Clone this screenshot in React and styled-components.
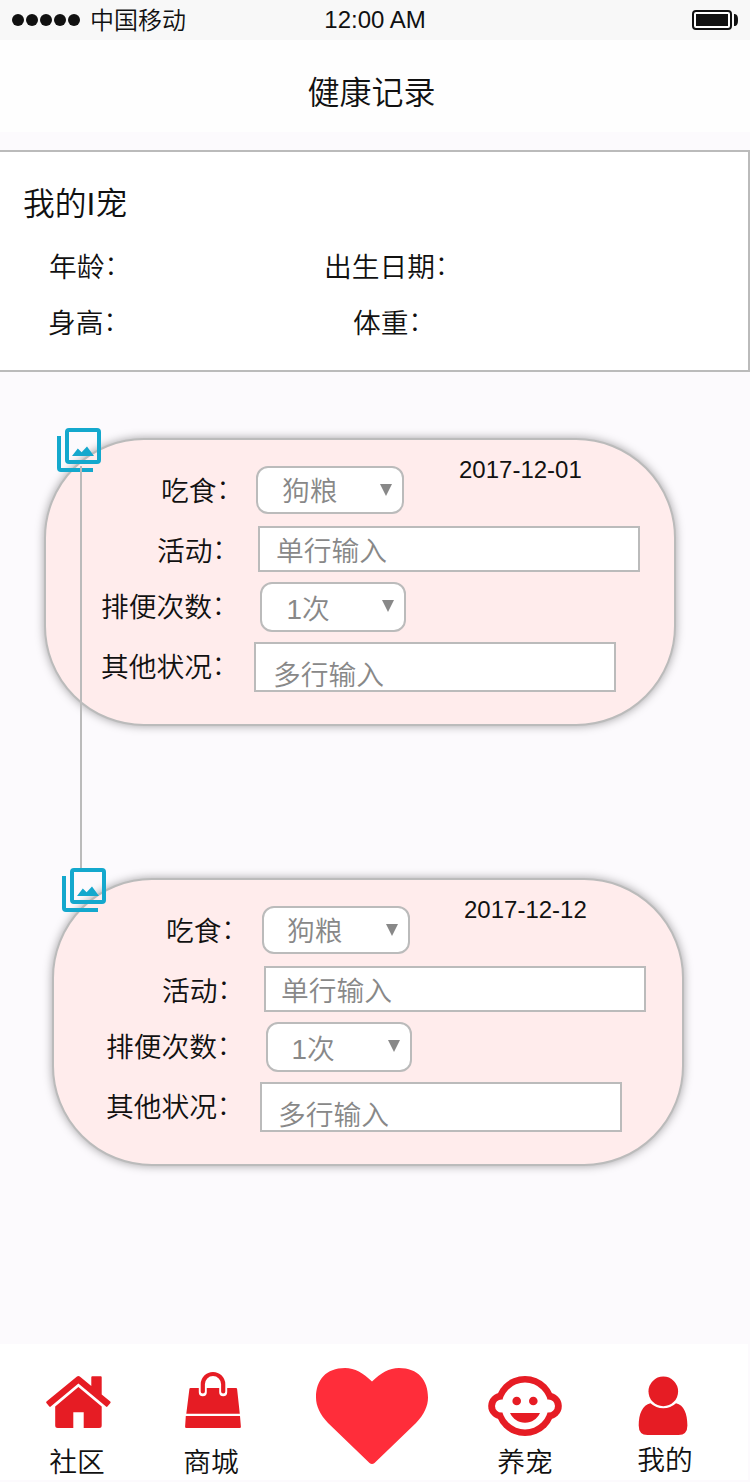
import React from "react";
import styled, { createGlobalStyle } from "styled-components";

const GlobalStyle = createGlobalStyle`
  * { box-sizing: border-box; }
  body {
    margin: 0;
    background: #fcfafd;
    color: #111;
    font-family: "Liberation Sans", "Noto Sans CJK SC", sans-serif;
    font-weight: 350;
  }
`;

const Screen = styled.div`
  width: 750px;
  height: 1482px;
  display: flex;
  flex-direction: column;
  overflow: hidden;
`;

const StatusBar = styled.div`
  height: 40px;
  flex: none;
  display: grid;
  grid-template-columns: 1fr auto 1fr;
  align-items: center;
  padding: 0 12px;
  background: #f8f8f8;
  font-size: 24px;
  line-height: 28px;
`;

const Carrier = styled.div`
  display: flex;
  align-items: center;
  gap: 10px;
`;

const CarrierName = styled.span`
  padding-top: 1px;
`;

const Signal = styled.div`
  display: flex;
  gap: 2px;
`;

const Dot = styled.i`
  width: 12px;
  height: 12px;
  border-radius: 50%;
  background: #111;
`;

const Battery = styled.svg`
  justify-self: end;
  display: block;
`;

const TitleBar = styled.h1`
  height: 92px;
  flex: none;
  margin: 0;
  padding: 16px 7px 0 0;
  background: #fefefe;
  font-size: 32px;
  font-weight: 350;
  line-height: 74px;
  text-align: center;
`;

const PetPanel = styled.section`
  height: 222px;
  flex: none;
  margin-top: 18px;
  padding: 33px 0 0 23px;
  background: #fff;
  border: 2px solid #bbb;
  border-left: 0;
`;

const PetName = styled.h2`
  margin: 0;
  font-size: 31.8px;
  font-weight: 350;
  line-height: 38px;
`;

const PetFacts = styled.div`
  display: flex;
  height: 56px;
  font-size: 27.75px;
  line-height: 34px;

  &:first-of-type { margin-top: 28px; }
`;

const Fact = styled.span`
  width: ${(p) => p.$width}px;
  margin-left: ${(p) => p.$indent}px;
`;

const Colon = styled.span`
  margin-left: -0.5px;
  font-weight: 300;
  line-height: 1;
  vertical-align: 2px;

  &::before { content: "："; }
`;

const Timeline = styled.main`
  position: relative;
  flex: 1;
  display: flex;
  flex-direction: column;
  gap: 152px;
  padding-top: 66px;
`;

const Thread = styled.div`
  position: absolute;
  left: 80px;
  top: 94px;
  width: 2px;
  height: 402px;
  background: #bbb;
`;

const RecordCard = styled.article`
  position: relative;
  width: 632px;
  height: 288px;
  margin-left: ${(p) => p.$left}px;
  padding: 26px 0 0 ${(p) => p.$inset}px;
  border: 2px solid #bbb;
  border-radius: 100px;
  background: #ffecec;
  box-shadow: 0 0 10px rgba(0, 0, 0, 0.35);
`;

const Marker = styled.svg`
  position: absolute;
  left: ${(p) => p.$x}px;
  top: -12px;
  width: 44px;
  height: 44px;
  color: #14a8cd;
`;

const Row = styled.div`
  display: flex;
  align-items: flex-start;
  height: ${(p) => p.$height}px;
  font-size: 27.75px;
  line-height: 34px;
`;

const Label = styled.label`
  width: ${(p) => p.$width}px;
  padding-top: ${(p) => p.$top}px;
  padding-left: ${(p) => p.$indent}px;
  white-space: nowrap;
`;

const Select = styled.div`
  display: flex;
  justify-content: space-between;
  width: ${(p) => p.$width}px;
  height: ${(p) => p.$height}px;
  padding: ${(p) => p.$top}px 10px 0 ${(p) => p.$pad}px;
  border: 2px solid #bbb;
  border-radius: 12px;
  background: #fff;
  color: #888;
`;

const Arrow = styled.svg`
  margin-top: ${(p) => p.$top}px;
`;

const Field = styled.div`
  width: ${(p) => p.$width}px;
  height: ${(p) => p.$height}px;
  padding: ${(p) => p.$top}px 0 0 ${(p) => p.$pad}px;
  border: 2px solid #bbb;
  background: #fff;
  color: #888;
`;

const DateText = styled.time`
  margin: -10px 0 0 ${(p) => p.$gap}px;
  font-size: 24px;
  line-height: 28px;
`;

const TabBar = styled.nav`
  display: flex;
  flex: none;
  width: 748px;
  height: 136px;
  margin-bottom: 2px;
  padding: 20px 0 0 37px;
  background: #fff;
`;

const Tab = styled.a`
  display: flex;
  flex-direction: column;
  align-items: center;
  width: ${(p) => p.$width || 80}px;
  margin-left: ${(p) => p.$gap || 0}px;
  font-size: 27.75px;
  line-height: 34px;
`;

const TabIcon = styled.svg`
  display: block;
  flex: none;
  fill: #e61c24;
`;

const TabLabel = styled.span`
  margin-top: ${(p) => p.$top}px;
`;

const HeartIcon = styled.svg`
  display: block;
  margin-top: 4px;
  fill: #ff2d3a;
`;

function DownArrow({ top }) {
  return (
    <Arrow $top={top} width="12" height="12" viewBox="0 0 12 12">
      <path d="M0 0H12L6 12Z" fill="#888" />
    </Arrow>
  );
}

function GalleryMarker({ x }) {
  return (
    <Marker $x={x} viewBox="0 0 44 44" fill="none" stroke="currentColor" strokeWidth="4">
      <rect x="10" y="2" width="32" height="32" rx="2" />
      <path d="M2 8V40Q2 42 4 42H36" />
      <path d="M15 28L20.8 20.6L24.6 24.2L30 18.5L37 28Z" fill="currentColor" stroke="none" />
    </Marker>
  );
}

function Record({ left, inset, markerX, labelWidth, textPad, dateGap, date }) {
  return (
    <RecordCard $left={left} $inset={inset}>
      <Row $height={60}>
        <Label $width={labelWidth} $top={9} $indent={60}>吃食<Colon /></Label>
        <Select $width={148} $height={48} $top={7} $pad={textPad + 8}>
          狗粮<DownArrow top={9} />
        </Select>
        <DateText $gap={dateGap}>{date}</DateText>
      </Row>
      <Row $height={56}>
        <Label $width={labelWidth + 2} $top={9} $indent={56}>活动<Colon /></Label>
        <Field $width={382} $height={46} $top={7} $pad={textPad}>单行输入</Field>
      </Row>
      <Row $height={60}>
        <Label $width={labelWidth + 4} $top={9} $indent={0}>排便次数<Colon /></Label>
        <Select $width={146} $height={50} $top={9} $pad={textPad + 8.5}>
          1次<DownArrow top={7} />
        </Select>
      </Row>
      <Row $height={50}>
        <Label $width={labelWidth - 2} $top={9} $indent={0}>其他状况<Colon /></Label>
        <Field $width={362} $height={50} $top={15} $pad={textPad + 1}>多行输入</Field>
      </Row>
      <GalleryMarker x={markerX} />
    </RecordCard>
  );
}

export default function App() {
  return (
    <Screen>
      <GlobalStyle />
      <StatusBar>
        <Carrier>
          <Signal>
            <Dot /><Dot /><Dot /><Dot /><Dot />
          </Signal>
          <CarrierName>中国移动</CarrierName>
        </Carrier>
        <span>12:00 AM</span>
        <Battery width="46" height="20" viewBox="0 0 46 20">
          <rect x="1" y="1" width="38" height="18" rx="3" fill="#fff" stroke="#111" strokeWidth="2" />
          <rect x="4" y="4" width="32" height="12" fill="#111" />
          <path d="M42 4C45 4 46 6 46 10S45 16 42 16Z" fill="#111" />
        </Battery>
      </StatusBar>
      <TitleBar>健康记录</TitleBar>
      <PetPanel>
        <PetName>我的I宠</PetName>
        <PetFacts>
          <Fact $indent={26} $width={275}>年龄<Colon /></Fact>
          <Fact $indent={0} $width={200}>出生日期<Colon /></Fact>
        </PetFacts>
        <PetFacts>
          <Fact $indent={25} $width={305}>身高<Colon /></Fact>
          <Fact $indent={0} $width={200}>体重<Colon /></Fact>
        </PetFacts>
      </PetPanel>
      <Timeline>
        <Record left={44} inset={55} markerX={11} labelWidth={155} textPad={16} dateGap={55} date="2017-12-01" />
        <Record left={52} inset={52} markerX={8} labelWidth={156} textPad={15} dateGap={54} date="2017-12-12" />
        <Thread />
      </Timeline>
      <TabBar>
        <Tab>
          <TabIcon width="80" height="80" viewBox="0 0 80 80">
            <path d="M40 12.6Q41.4 11.4 42.8 12.6L54.3 22V13.2Q54.3 12.2 55.3 12.2H63.7Q64.7 12.2 64.7 13.2V30.4L73.3 37.6Q74 38.3 73.4 39L70.4 42.5Q69.7 43.2 69 42.6L41.4 19.4L13.7 42.6Q13 43.2 12.3 42.5L9.4 39Q8.8 38.3 9.5 37.6Z" />
            <path d="M41.4 23L64.7 42.4V61.5Q64.7 64 62.2 64H46.7V48.2H36.3V64H20.7Q18.2 64 18.2 61.5V42.4Z" />
          </TabIcon>
          <TabLabel $top={2}>社区</TabLabel>
        </Tab>
        <Tab $gap={54}>
          <TabIcon width="80" height="80" viewBox="0 0 80 80">
            <path d="M19.5 24H65Q66 24 66.1 25L68.8 49.8H15.3L18.4 25Q18.5 24 19.5 24Z" />
            <path d="M14.8 52H69L69.9 62.7Q70 64 68.7 64H15.3Q14 64 14.1 62.7Z" />
            <path d="M31.8 23V28.2M52.2 23V28.2" fill="none" stroke="#fff" strokeWidth="8" strokeLinecap="round" />
            <path d="M31.8 27.5V20.2A10.2 10.2 0 0 1 52.2 20.2V27.5" fill="none" stroke="#e61c24" strokeWidth="4.2" strokeLinecap="round" />
          </TabIcon>
          <TabLabel $top={2}>商城</TabLabel>
        </Tab>
        <Tab $gap={65} $width={112}>
          <HeartIcon width="112" height="96" viewBox="0 0 112 96">
            <path d="M56 13.5C47 5 39 0 29 0C10 0 0 12 0 29.5C0 38 4 46.5 12 55L53.5 95Q56 97 58.5 95L100 55C108 46.5 112 38 112 29.5C112 12 102 0 83 0C73 0 65 5 56 13.5Z" />
          </HeartIcon>
        </Tab>
        <Tab $gap={57}>
          <TabIcon width="80" height="80" viewBox="0 0 80 80">
            <circle cx="40" cy="42" r="30" />
            <circle cx="16.4" cy="42" r="13.2" />
            <circle cx="63.6" cy="42" r="13.2" />
            <g fill="#fff">
              <circle cx="40" cy="42" r="23.5" />
              <circle cx="16.6" cy="42" r="6.6" />
              <circle cx="63.4" cy="42" r="6.6" />
            </g>
            <circle cx="31.7" cy="37" r="4.3" />
            <circle cx="48.3" cy="37" r="4.3" />
            <path d="M25 49H55C52 55 47 58.7 40 58.7S28 55 25 49Z" />
          </TabIcon>
          <TabLabel $top={2}>养宠</TabLabel>
        </Tab>
        <Tab $gap={60}>
          <TabIcon width="80" height="80" viewBox="0 0 80 80">
            <circle cx="38.3" cy="27.4" r="14.8" />
            <path d="M25.5 39.3Q31 44.3 38.3 44.3T51 39.3C59 41 62.4 50 62.4 61.5Q62.4 71 53.5 71H22.5Q13.7 71 13.7 61.5C13.7 50 17.5 41 25.5 39.3Z" />
          </TabIcon>
          <TabLabel $top={0}>我的</TabLabel>
        </Tab>
      </TabBar>
    </Screen>
  );
}
